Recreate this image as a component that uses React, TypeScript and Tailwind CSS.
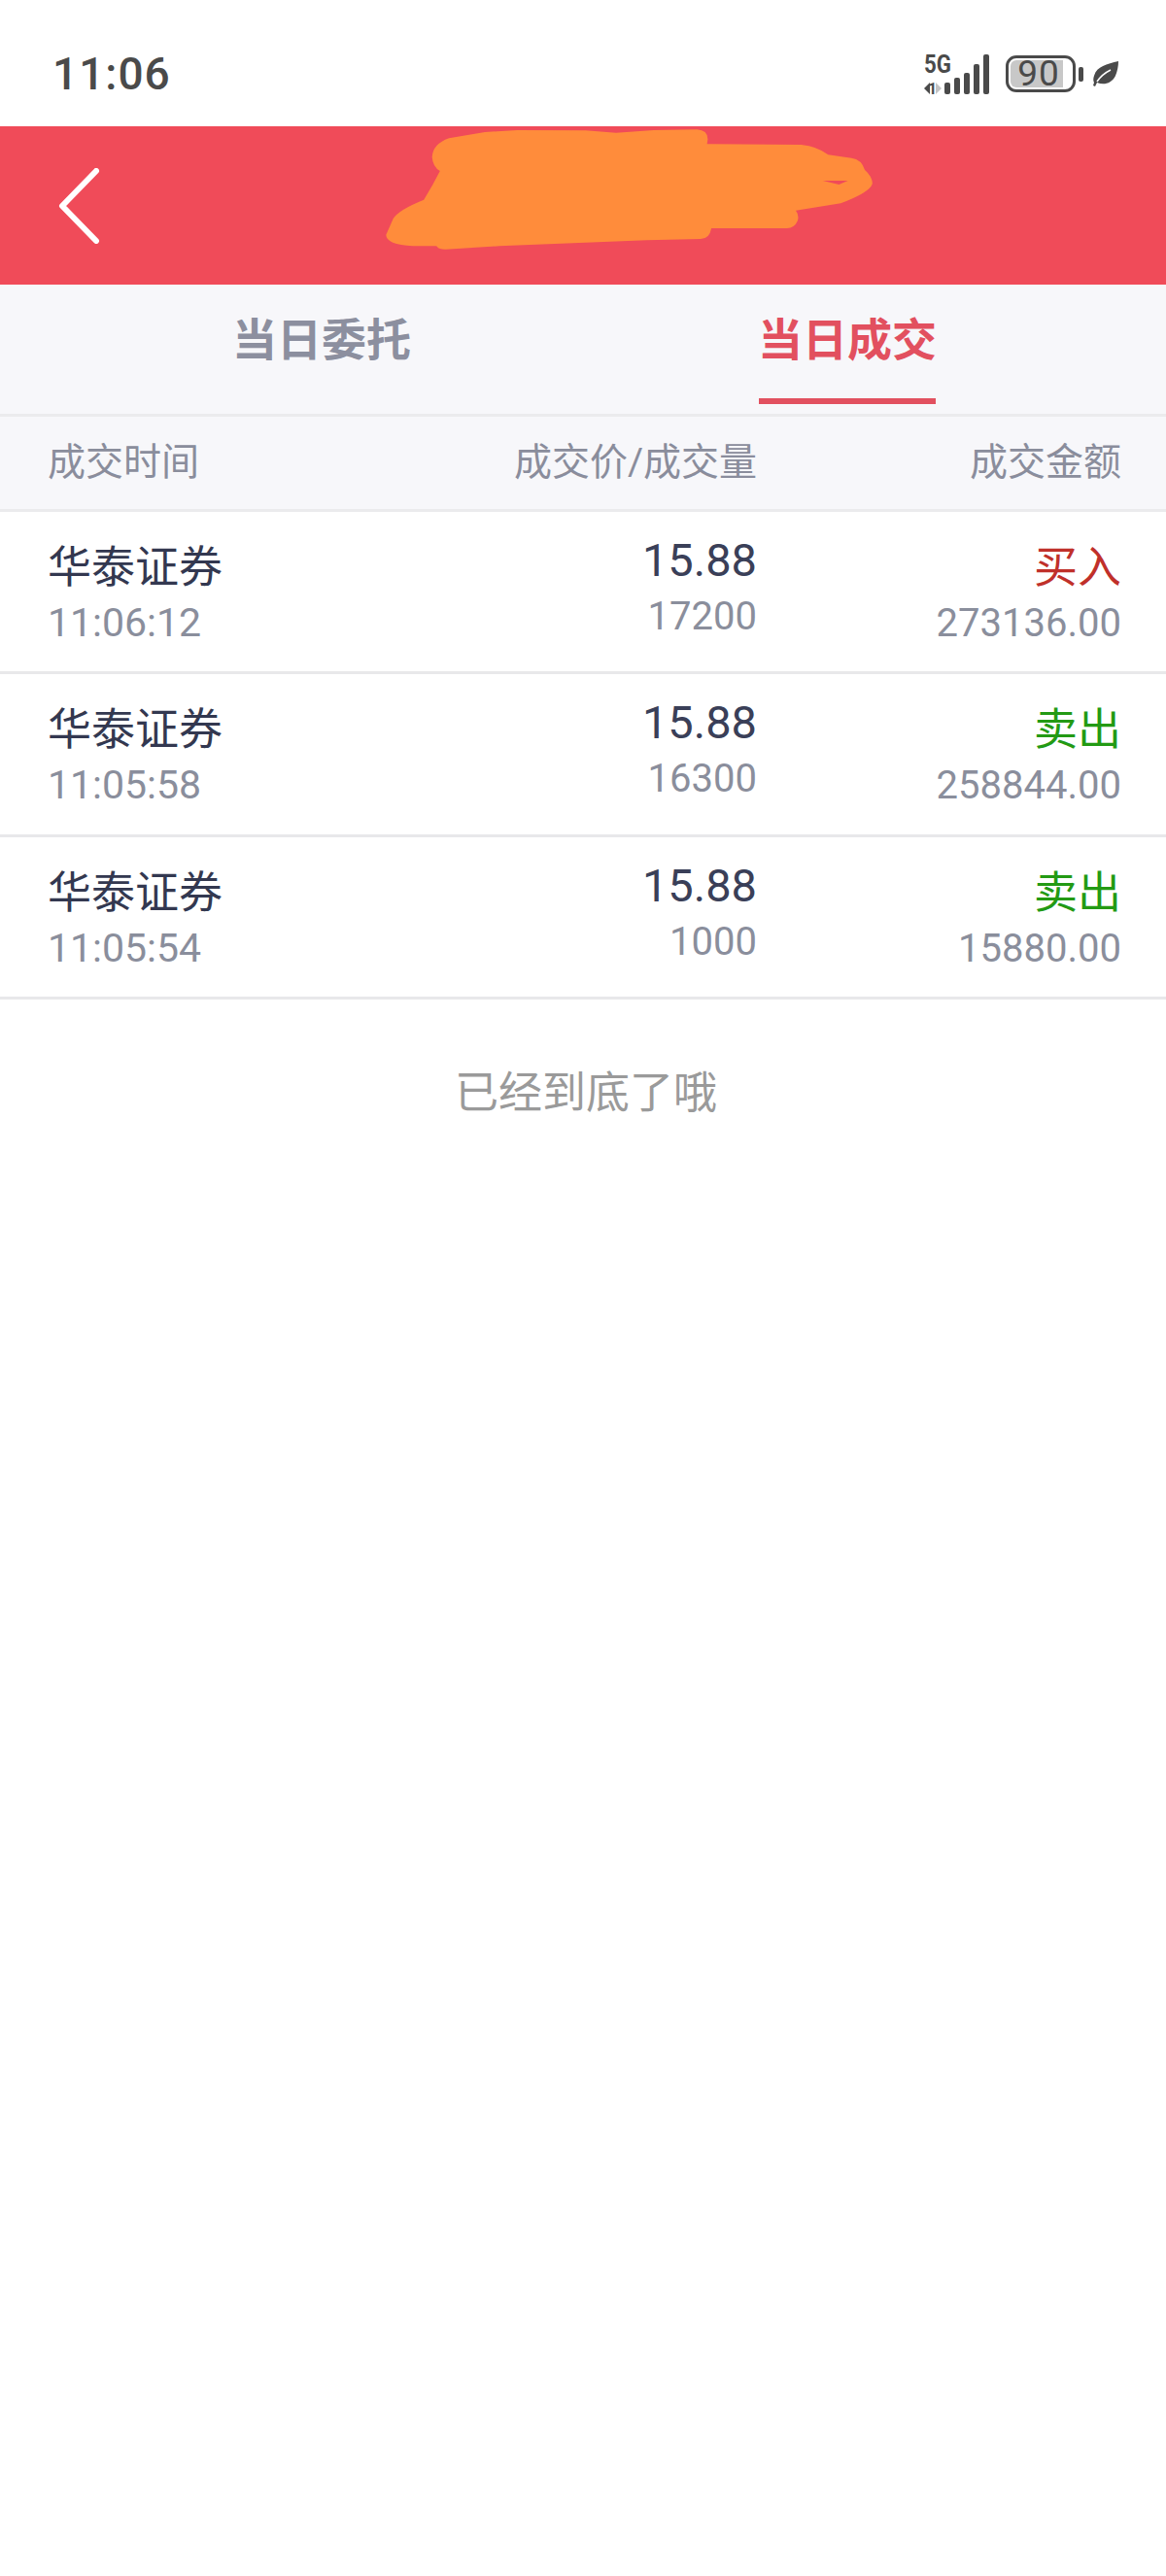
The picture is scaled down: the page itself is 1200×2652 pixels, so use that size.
type Trade = {
  name: string;
  time: string;
  price: string;
  qty: string;
  side: "买入" | "卖出";
  amount: string;
};

const trades: Trade[] = [
  { name: "华泰证券", time: "11:06:12", price: "15.88", qty: "17200", side: "买入", amount: "273136.00" },
  { name: "华泰证券", time: "11:05:58", price: "15.88", qty: "16300", side: "卖出", amount: "258844.00" },
  { name: "华泰证券", time: "11:05:54", price: "15.88", qty: "1000", side: "卖出", amount: "15880.00" },
];

function StatusIcons() {
  return (
    <div className="flex items-center">
      <svg width="72" height="44" viewBox="0 0 72 44" className="mr-[13px] mt-[4px] overflow-visible">
        <text
          x="1"
          y="19"
          fontSize="25"
          fontWeight="700"
          fontFamily="Roboto, sans-serif"
          fill="#4a4a4a"
          textLength="28"
          lengthAdjust="spacingAndGlyphs"
        >
          5G
        </text>
        <text x="5" y="41" fontSize="16" fontWeight="700" fontFamily="Roboto, sans-serif" fill="#4a4a4a">
          1
        </text>
        <path d="M7 29 L1 35 L7 41 Z" fill="#4a4a4a" />
        <path d="M13 29 L19 35 L13 41 Z" fill="#c4c4c4" />
        <rect x="22" y="29" width="6" height="12" rx="2" fill="#4a4a4a" />
        <rect x="32" y="24" width="6" height="17" rx="2" fill="#4a4a4a" />
        <rect x="42" y="19" width="6" height="22" rx="2" fill="#4a4a4a" />
        <rect x="52" y="10" width="6" height="31" rx="2" fill="#4a4a4a" />
        <rect x="62" y="0" width="6" height="41" rx="2" fill="#4a4a4a" />
      </svg>
      <div className="relative flex h-[38px] w-[72px] items-center justify-center rounded-[11px] border-[3px] border-[#4a4a4a]">
        <div className="absolute bottom-[2px] left-[2px] top-[2px] w-[54px] rounded-l-[6px] bg-[#c8c8c8]" />
        <span className="relative ml-[-4px] text-[37px] leading-[32px] tracking-[1px] text-[#4a4a4a]">90</span>
      </div>
      <div className="ml-[3px] h-[15px] w-[5px] rounded-[2px] bg-[#4a4a4a]" />
      <svg width="28" height="26" viewBox="0 0 28 26" className="ml-[9px]">
        <path
          d="M27 0 C15 3 5 5 2 15 C1 18 1 20 2 22 L1 25 L3 26 L5 22 C12 25 20 23 24 15 C26 10 27 5 27 0 Z"
          fill="#4a4a4a"
        />
        <path d="M5 21 C9 15 13 12 19 9" stroke="#ffffff" strokeWidth="1.5" fill="none" />
      </svg>
    </div>
  );
}

function Scribble() {
  // orange scribble covering the account name
  return (
    <svg
      width="580"
      height="180"
      viewBox="0 0 1568 540"
      preserveAspectRatio="none"
      className="absolute left-[340px] top-[-20px]"
    >
      <path
        fillRule="evenodd"
        fill="#ff8c3b"
        d="M1020 70 Q1050 72 1050 100 L1048 115 L1310 117 Q1355 122 1385 148 L1450 158 Q1478 162 1487 195 Q1508 215 1508 238 Q1500 265 1420 298 L1295 320 Q1305 335 1300 352 Q1290 378 1265 375 L1060 375 Q1055 408 1030 408 L880 412 L470 430 L320 440 Q300 440 295 430 L230 430 Q155 425 155 395 L175 345 Q190 318 260 287 L285 240 L305 198 Q285 185 283 155 Q285 115 330 97 L430 78 L520 72 L710 73 L795 80 L900 72 Z M1370 228 L1440 228 L1415 240 Z"
      />
    </svg>
  );
}

export default function App() {
  return (
    <div
      className="min-h-[2652px] w-[1200px] bg-white"
      style={{ fontFamily: 'Roboto, "Noto Sans CJK SC", sans-serif' }}
    >
      {/* status bar */}
      <div className="flex h-[130px] items-center justify-between pl-[54px] pr-[48px] pt-[22px]">
        <span className="text-[46px] font-medium leading-none tracking-[1px] text-[#4a4a4a]">11:06</span>
        <StatusIcons />
      </div>

      {/* title bar */}
      <div className="relative flex h-[163px] items-center bg-[#f04b59] pl-[60px]">
        <svg width="44" height="78" viewBox="0 0 44 78" fill="none">
          <path d="M39 3 L4 39 L39 75" stroke="#ffffff" strokeWidth="6" strokeLinecap="round" strokeLinejoin="round" />
        </svg>
        <Scribble />
      </div>

      {/* tabs */}
      <div className="flex h-[136px] items-start border-b-[3px] border-[#ebebed] bg-[#f7f7fa] pl-[239px]">
        <button className="h-[123px] whitespace-nowrap pb-[9px] text-[46px] font-bold leading-none text-[#8c8f9f]">
          当日委托
        </button>
        <button className="ml-[358px] flex h-[123px] w-[182px] justify-center whitespace-nowrap border-b-[6px] border-[#e2505f] pt-[34px] text-[46px] font-bold leading-none text-[#e2505f]">
          当日成交
        </button>
      </div>

      {/* column header */}
      <div className="grid h-[98px] grid-cols-[300px_430px_375px] items-center border-b-[3px] border-[#ebebed] bg-[#f7f7fa] pl-[49px] text-[39px] text-[#8a8d9c]">
        <span>成交时间</span>
        <span className="text-right">成交价/成交量</span>
        <span className="text-right">成交金额</span>
      </div>

      {/* rows */}
      {trades.map((t) => (
        <div
          key={t.time}
          className="grid h-[167.33px] grid-cols-[300px_430px_375px] border-b-[3px] border-[#e8e8ea] pl-[49px]"
        >
          <div className="pt-[28px]">
            <div className="text-[45px] leading-[60px] text-[#333850]">{t.name}</div>
            <div className="text-[41px] leading-[52px] text-[#8a8e9c]">{t.time}</div>
          </div>
          <div className="pt-[20px] text-right">
            <div className="text-[47px] leading-[60px] text-[#3a3f58]">{t.price}</div>
            <div className="text-[40px] leading-[56px] text-[#8a8e9c]">{t.qty}</div>
          </div>
          <div className="pt-[28px] text-right">
            <div className={`text-[45px] leading-[60px] ${t.side === "买入" ? "text-[#c0302a]" : "text-[#239a14]"}`}>
              {t.side}
            </div>
            <div className="text-[40px] leading-[54px] text-[#8a8e9c]">{t.amount}</div>
          </div>
        </div>
      ))}

      <div className="pl-[6px] pt-[67px] text-center text-[45px] leading-[60px] text-[#9a9a9a]">已经到底了哦</div>
    </div>
  );
}
